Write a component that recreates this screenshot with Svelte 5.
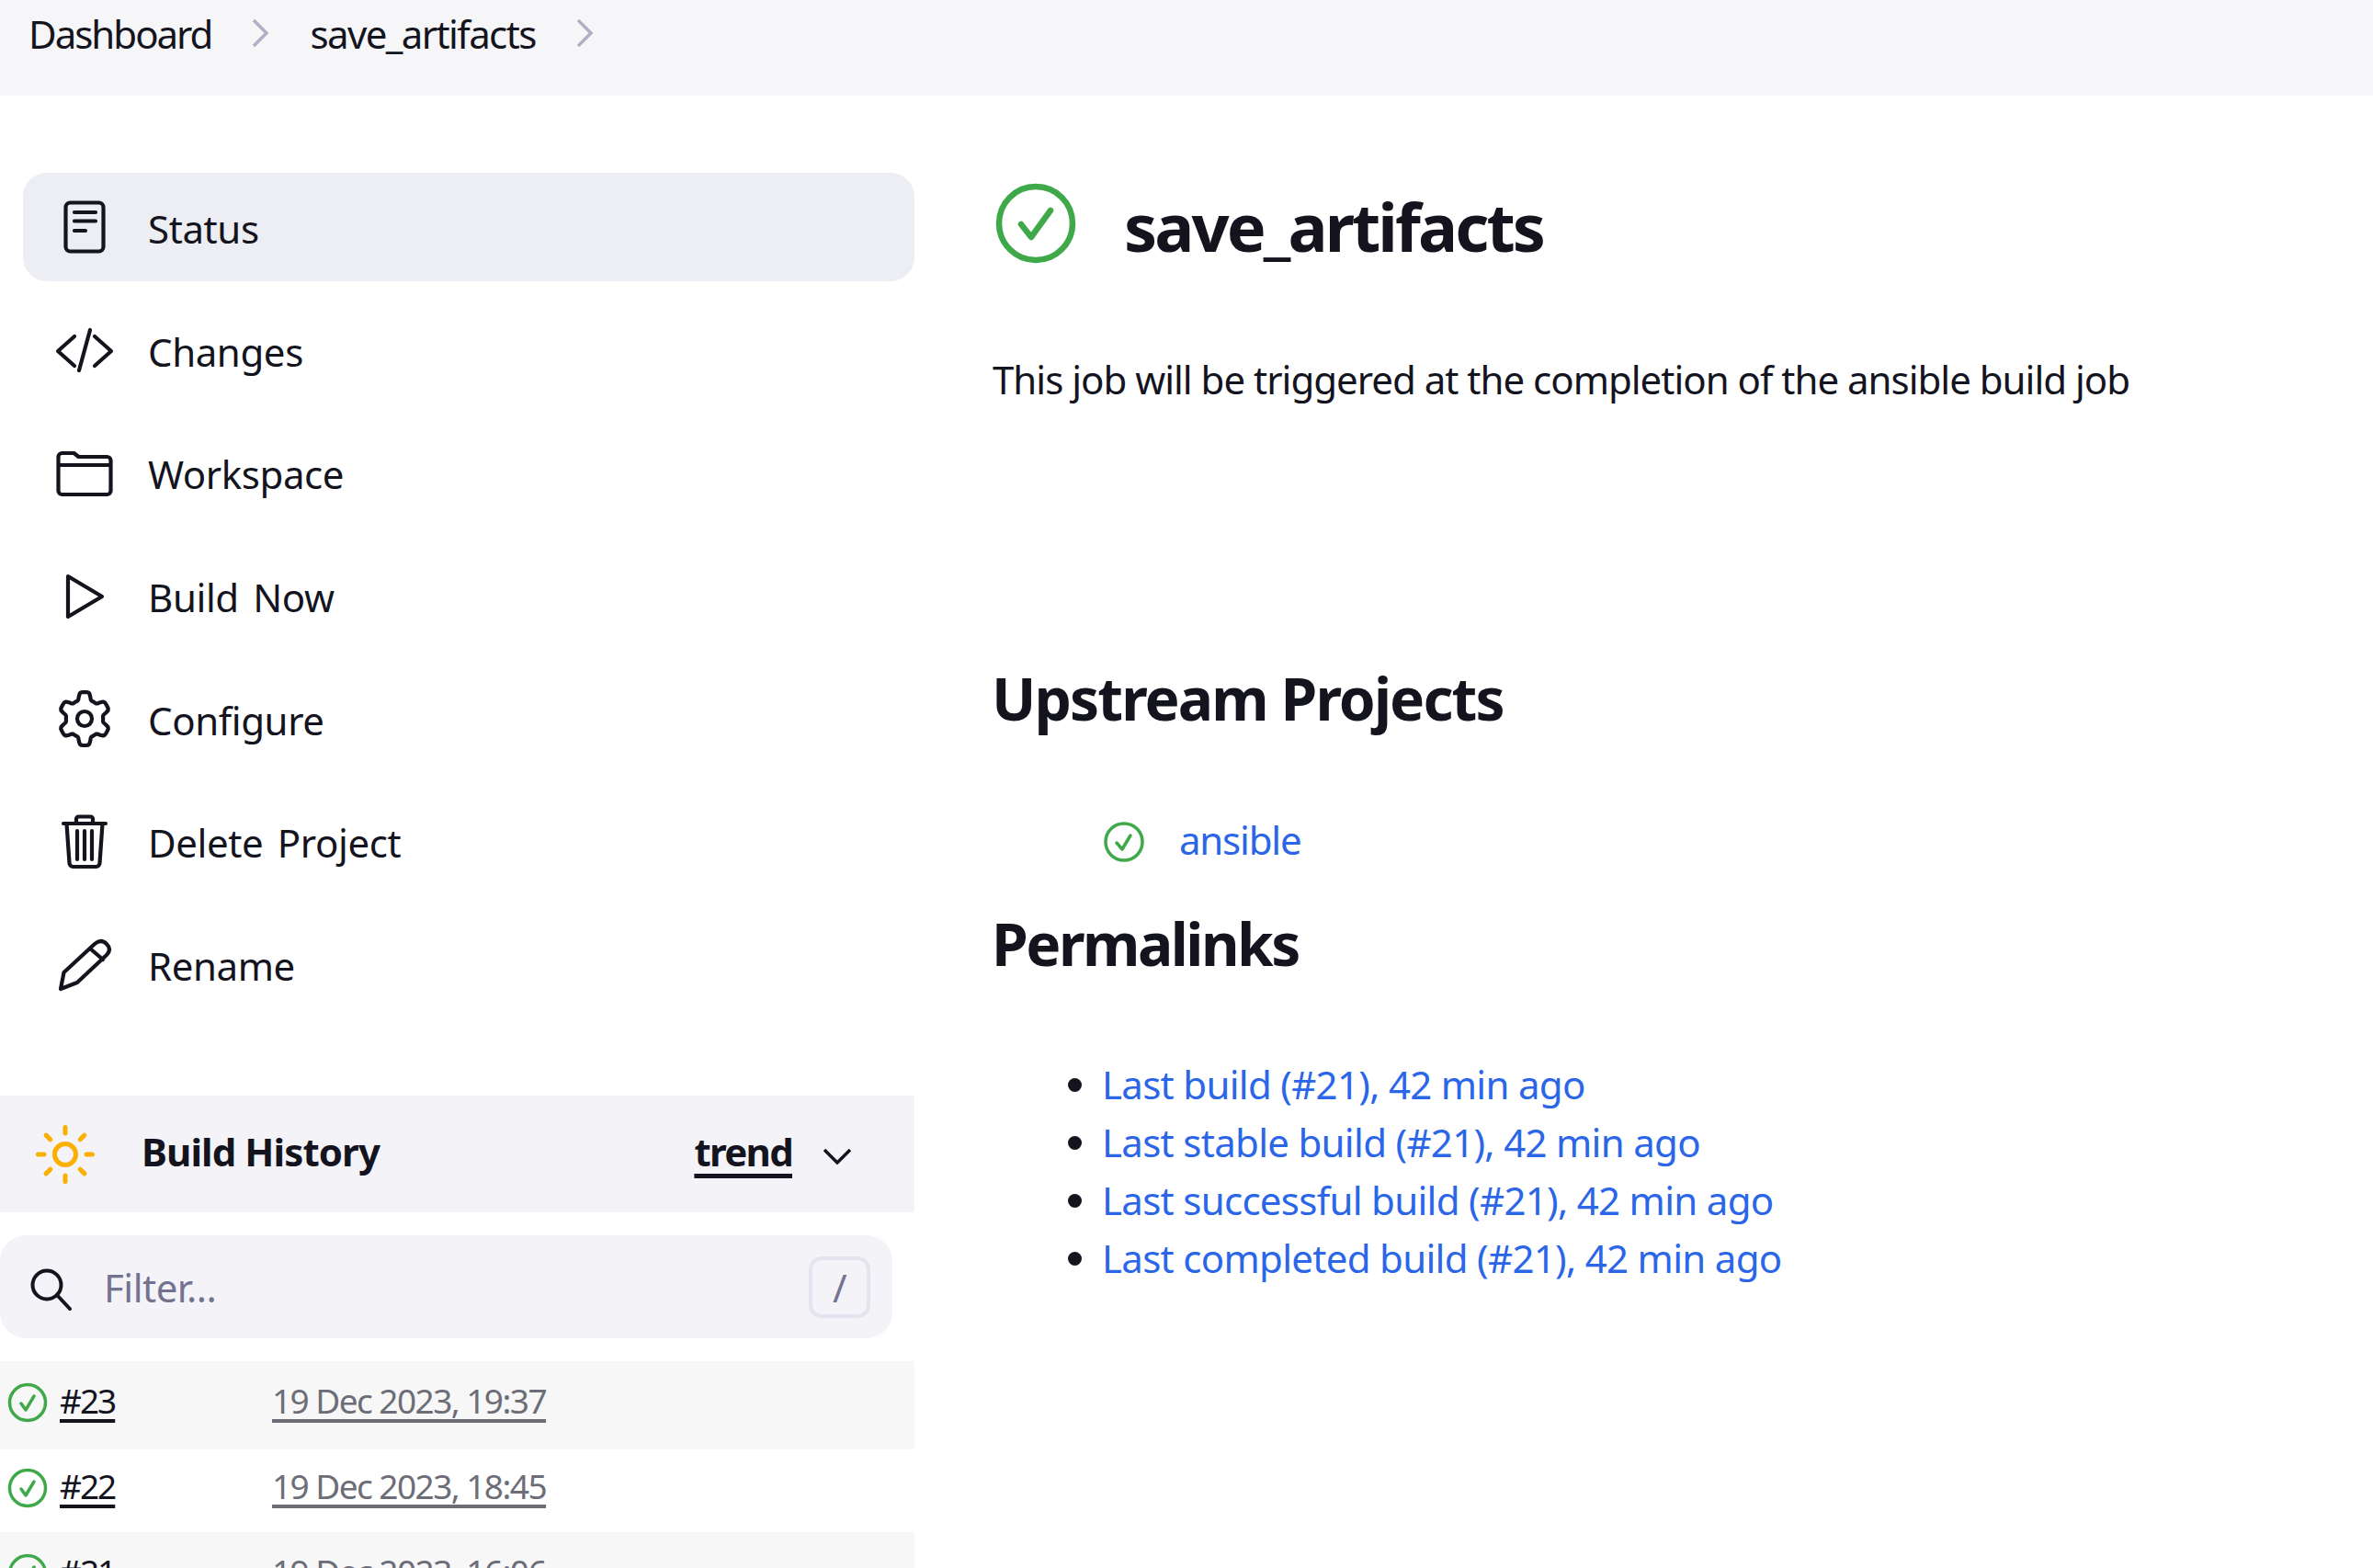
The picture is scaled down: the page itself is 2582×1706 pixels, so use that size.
<script>
  const tasks = ['Status', 'Changes', 'Workspace', 'Build Now', 'Configure', 'Delete Project', 'Rename'];
  const permalinks = ['Last build (#21), 42 min ago', 'Last stable build (#21), 42 min ago', 'Last successful build (#21), 42 min ago', 'Last completed build (#21), 42 min ago'];
  const builds = [['#23', '19 Dec 2023, 19:37'], ['#22', '19 Dec 2023, 18:45'], ['#21', '19 Dec 2023, 16:06']];
  const rays = [0, 45, 90, 135, 180, 225, 270, 315];
  let gear = '';
  for (let i = 0; i < 96; i++) {
    const t = (i / 96) * Math.PI * 2;
    const k = Math.max(-1, Math.min(1, Math.cos(6 * t) * 2));
    const r = 25 + 4 * k;
    gear += (i ? 'L' : 'M') + (36 + Math.sin(t) * r * 0.96).toFixed(2) + ' ' + (36 - Math.cos(t) * r).toFixed(2);
  }
  gear += 'Z';
</script>

<div class="page">
  <header class="top">
    <span class="bc">Dashboard</span>
    <svg class="crumb" viewBox="0 0 20 32"><path d="M3 2 L17 16 L3 30" /></svg>
    <span class="bc second">save_artifacts</span>
    <svg class="crumb" viewBox="0 0 20 32"><path d="M3 2 L17 16 L3 30" /></svg>
  </header>

  <div class="layout">
    <aside class="side">
      <nav class="tasks">
        {#each tasks as t, i}
          <div class="task" class:active={i === 0}>
            <svg class="ti" viewBox="0 0 72 72">
              {#if i === 0}
                <rect x="15.5" y="9.5" width="41" height="53" rx="5" />
                <path d="M25 20h23M25 29.5h23M25 40h12" />
              {:else if i === 1}
                <path d="M25 21 L7 37 L25 53M47 21 L65 37 L47 53M42 14 L30 58" />
              {:else if i === 2}
                <path d="M7.500 56 V19 a4 4 0 0 1 4-4 h13 l5 4 h31 a4 4 0 0 1 4 4 v33 a4 4 0 0 1-4 4 h-49 a4 4 0 0 1-4-4z M7.500 28 h57" />
              {:else if i === 3}
                <path d="M18 15 L55 37 L18 59 Z" />
              {:else if i === 4}
                <path d={gear} /><circle cx="36" cy="36" r="8" />
              {:else if i === 5}
                <path d="M13 17h46M27 17v-5a2.5 2.5 0 0 1 2.500-2.500h13a2.500 2.500 0 0 1 2.500 2.500v5M16.500 17 L19.500 60a4 4 0 0 0 4 4h25a4 4 0 0 0 4-4L55.500 17M28 25v31M36 25v31M44 25v31" />
              {:else}
                <path d="M10 63 L13.500 45 L47 14 Q54 8 60 14 Q66 20 60 26 L28 56 Z M42 19 L56 31" />
              {/if}
            </svg>
            <span>{t}</span>
          </div>
        {/each}
      </nav>

      <div class="bh">
        <svg class="sun" viewBox="0 0 72 72">
          <circle cx="36" cy="36" r="11.500" />
          {#each rays as a}
            <line x1="36" y1="13" x2="36" y2="6.500" transform="rotate({a} 36 36)" />
          {/each}
        </svg>
        <strong class="bh-title">Build History</strong>
        <strong class="trend">trend</strong>
        <svg class="chev" viewBox="0 0 32 18"><path d="M2 2 L16 16 L30 2" /></svg>
      </div>

      <div class="filter">
        <svg class="search" viewBox="0 0 46 46"><circle cx="18" cy="18" r="15.500" /><path d="M29 29 L43 44" /></svg>
        <span class="ph">Filter...</span>
        <span class="key">/</span>
      </div>

      <div class="rows">
        {#each builds as b}
          <div class="row">
            <svg class="ok" viewBox="0 0 44 44"><circle cx="22" cy="22" r="19.500" /><path d="M15 23 L20 30 L29 15" /></svg>
            <span class="num">{b[0]}</span>
            <span class="date">{b[1]}</span>
          </div>
        {/each}
      </div>
    </aside>

    <main class="main">
      <div class="head">
        <svg class="big" viewBox="0 0 88 88"><circle cx="44" cy="44" r="40" /><path d="M28 45 L39 59 L60 30" /></svg>
        <h1>save_artifacts</h1>
      </div>
      <p class="desc">This job will be triggered at the completion of the ansible build job</p>
      <h2 class="up">Upstream Projects</h2>
      <div class="ans">
        <svg viewBox="0 0 44 44"><circle cx="22" cy="22" r="20" /><path d="M14 23 L20 30 L29 15" /></svg>
        <a href="#a">ansible</a>
      </div>
      <h2 class="perm">Permalinks</h2>
      <ul>
        {#each permalinks as p}
          <li><a href="#a">{p}</a></li>
        {/each}
      </ul>
    </main>
  </div>
</div>

<style>
  :global(body) { margin: 0; background: #fff; }
  .page {
    height: 1706px;
    overflow: hidden;
    font-family: "Noto Sans", "Open Sans", sans-serif;
    font-size: 42px;
    letter-spacing: -1px;
    color: #14141f;
  }
  svg { display: block; flex: none; fill: none; }
  .top {
    height: 104px;
    background: #f6f6f8;
    display: flex;
    align-items: flex-start;
    padding: 8px 0 0 31px;
    box-sizing: border-box;
    line-height: 58px;
  }
  .bc { letter-spacing: -2px; }
  .bc.second { letter-spacing: -1.6px; }
  .crumb { width: 20px; height: 32px; margin: 12px 44px 0 43px; stroke: #b0afc5; stroke-width: 3.5; }
  .layout { display: flex; align-items: flex-start; }
  .side { width: 995px; flex: none; padding-top: 84px; }
  .tasks { padding-left: 25px; display: grid; grid-auto-rows: 118px; row-gap: 15.7px; }
  .task {
    display: flex;
    align-items: center;
    gap: 33px;
    padding-left: 31px;
    border-radius: 26px;
    letter-spacing: -0.4px;
    word-spacing: 5px;
  }
  .task span { position: relative; top: 1.5px; }
  .task.active { background: #edeef3; }
  .ti { width: 72px; height: 72px; stroke: #14141f; stroke-width: 4.2; stroke-linecap: round; stroke-linejoin: round; }
  .bh {
    margin-top: 84px;
    height: 127px;
    background: #f3f3f8;
    display: flex;
    align-items: center;
    position: relative;
  }
  .sun { width: 72px; height: 72px; margin-left: 35px; stroke: #f9b000; stroke-width: 5; stroke-linecap: round; }
  .bh-title { position: relative; top: -3px; margin-left: 47px; font-weight: 700; letter-spacing: -0.9px; }
  .trend { position: relative; top: -3px; margin-left: auto; font-weight: 700; letter-spacing: -1.7px; text-decoration: underline; text-decoration-thickness: 5px; text-underline-offset: 8px; }
  .chev { width: 32px; height: 18px; margin: 4px 68px 0 33px; stroke: #14141f; stroke-width: 3.5; }
  .filter {
    margin-top: 25px;
    width: 971px;
    height: 112px;
    background: #f3f3f8;
    border-radius: 28px;
    display: flex;
    align-items: center;
    box-sizing: border-box;
    padding-left: 33px;
    color: #737391;
    letter-spacing: -0.5px;
  }
  .search { width: 46px; height: 46px; margin-top: 6px; stroke: #14141f; stroke-width: 4; stroke-linecap: round; }
  .ph { margin-left: 34px; }
  .key {
    margin-left: auto;
    margin-right: 24px;
    width: 67px;
    height: 67px;
    box-sizing: border-box;
    border: 4px solid #e4e4ee;
    border-radius: 14px;
    display: flex;
    align-items: center;
    justify-content: center;
  }
  .rows { margin-top: 25px; }
  .row {
    height: 90px;
    box-sizing: border-box;
    padding: 0 0 6px 8px;
    display: flex;
    align-items: center;
    font-size: 37px;
  }
  .row:nth-child(odd) { height: 96px; background: #f7f7f8; }
  .ok { width: 44px; height: 44px; stroke: #3fa94a; stroke-width: 3.500; stroke-linecap: round; stroke-linejoin: round; }
  .num { position: relative; top: -3px; margin-left: 13px; width: 231px; letter-spacing: -2px; text-decoration: underline; text-decoration-thickness: 4px; text-underline-offset: 6px; }
  .date { position: relative; top: -3px; color: #6d6d78; letter-spacing: -1.55px; text-decoration: underline; text-decoration-thickness: 4px; text-underline-offset: 6px; }
  .main { padding: 94px 0 0 85px; }
  .head { display: flex; align-items: center; height: 90px; }
  .big { width: 88px; height: 88px; margin-left: 3px; stroke: #3fa94a; stroke-width: 6.500; stroke-linecap: round; stroke-linejoin: round; }
  h1 { margin: 5px 0 0 52px; font-size: 72px; font-weight: 700; line-height: 90px; letter-spacing: -2.9px; }
  .desc { margin: 93px 0 0; line-height: 63px; }
  h2 { margin: 0 0 0 -1px; font-size: 64px; line-height: 80px; font-weight: 700; }
  .up { margin-top: 276px; letter-spacing: -1.9px; }
  .ans { display: flex; align-items: center; margin: 81.5px 0 0 121px; height: 63px; letter-spacing: -1.2px; }
  .ans svg { width: 44px; height: 44px; margin-top: 6px; stroke: #3fa94a; stroke-width: 3.500; stroke-linecap: round; stroke-linejoin: round; }
  a { color: #2b66e8; text-decoration: none; }
  .ans a { margin-left: 38px; }
  .perm { margin-top: 42px; letter-spacing: -2.5px; }
  ul { margin: 81px 0 0; padding: 0 0 0 119px; letter-spacing: -0.7px; }
  li { line-height: 63px; }
</style>
